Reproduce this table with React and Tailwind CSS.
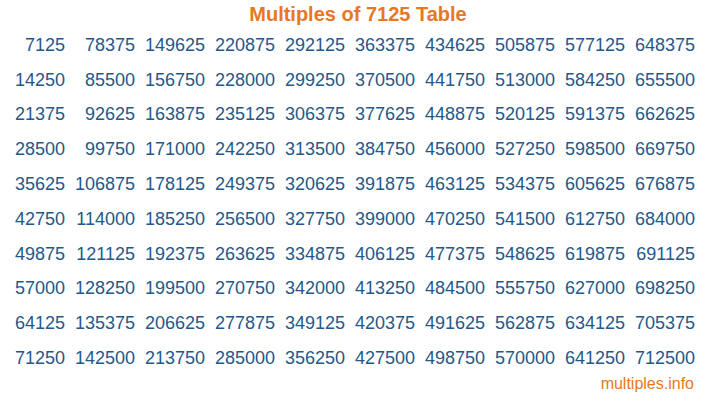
const BASE = 7125;

const ROWS = Array.from({ length: 10 }, (_, r) =>
  Array.from({ length: 10 }, (_, c) => BASE * (r + 1 + 10 * c))
);

export default function App() {
  return (
    <div className="w-[716px] h-[400px] bg-white font-['Liberation_Sans',Arial,sans-serif] overflow-hidden">
      <h1 className="h-[28px] flex items-center justify-center text-[20px] font-bold text-[#e87722] leading-none">
        Multiples of {BASE} Table
      </h1>
      <div className="grid grid-cols-[repeat(10,70px)] auto-rows-[34.8px] text-[18px] text-[#255888]">
        {ROWS.map((row, r) =>
          row.map((n, c) => (
            <div key={`${r}-${c}`} className="flex items-center justify-end pr-[5px]">
              {n}
            </div>
          ))
        )}
      </div>
      <div className="flex justify-end pr-[22px] text-[16px] leading-[16px] text-[#e87722]">
        multiples.info
      </div>
    </div>
  );
}
